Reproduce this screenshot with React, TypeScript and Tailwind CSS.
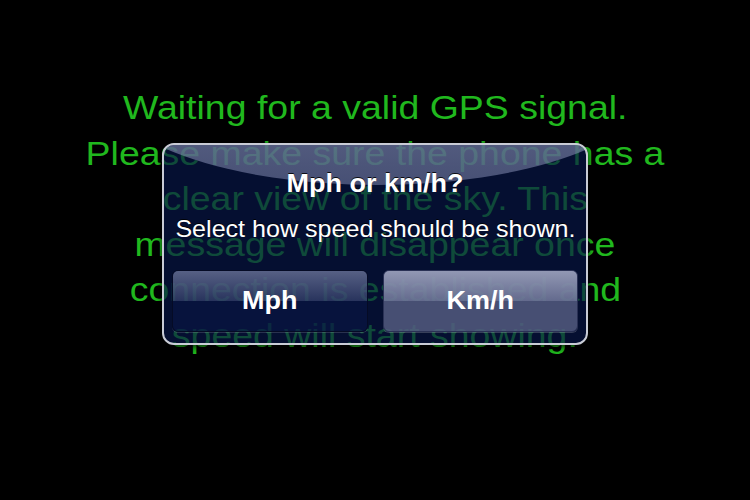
import React from 'react';

const lines = [
  'Waiting for a valid GPS signal.',
  'Please make sure the phone has a',
  'clear view of the sky. This',
  'message will disappear once',
  'connection is established and',
  'speed will start showing.',
];

export default function App() {
  return (
    <div className="relative w-[750px] h-[500px] bg-black overflow-hidden" style={{ fontFamily: '"Liberation Sans", Arial, sans-serif' }}>
      {/* Background status text */}
      <div className="pt-[85px] flex flex-col items-center text-[33px] leading-[45.5px] text-[#20b81e]">
        {lines.map((l) => (
          <div key={l} className="scale-x-[1.135] whitespace-nowrap">{l}</div>
        ))}
      </div>

      {/* Alert */}
      <div className="absolute left-[162px] top-[143px] w-[426px] h-[202px] rounded-[12px] border-2 border-[#c9ccd6] bg-[rgba(8,22,72,0.68)] shadow-[0_2px_6px_rgba(0,0,0,0.8)] overflow-hidden">
        {/* gloss */}
        <div className="absolute -left-[60px] -top-[158px] w-[546px] h-[198px] rounded-[50%] bg-gradient-to-b from-[rgba(170,176,204,0.72)] to-[rgba(125,133,172,0.55)]" />
        <div className="relative flex flex-col items-center h-full px-[8px] pt-[23px] text-white [text-shadow:0_-1px_0_rgba(0,0,0,0.85)]">
          <div className="text-[25px] leading-[30px] font-bold scale-x-[1.08] whitespace-nowrap">Mph or km/h?</div>
          <div className="mt-[17px] text-[24px] leading-[28px] scale-x-[1.045] whitespace-nowrap">Select how speed should be shown.</div>
          <div className="mt-[27px] flex gap-[15px] w-full">
            <button className="relative flex-1 h-[62px] rounded-[6px] border border-[#050b25] overflow-hidden bg-[rgba(10,22,70,0.62)] shadow-[0_1px_0_rgba(255,255,255,0.15)]">
              <div className="absolute inset-x-0 top-0 h-1/2 bg-gradient-to-b from-[rgba(140,148,180,0.6)] to-[rgba(90,100,140,0.4)]" />
              <span className="relative inline-block text-[25px] font-bold scale-x-[1.08]">Mph</span>
            </button>
            <button className="relative flex-1 h-[62px] rounded-[6px] border border-[#2a3155] overflow-hidden bg-[rgba(88,95,132,0.8)] shadow-[0_1px_0_rgba(255,255,255,0.2)]">
              <div className="absolute inset-x-0 top-0 h-1/2 bg-gradient-to-b from-[rgba(175,180,205,0.72)] to-[rgba(125,131,165,0.52)]" />
              <span className="relative inline-block text-[25px] font-bold scale-x-[1.08]">Km/h</span>
            </button>
          </div>
        </div>
      </div>
    </div>
  );
}
